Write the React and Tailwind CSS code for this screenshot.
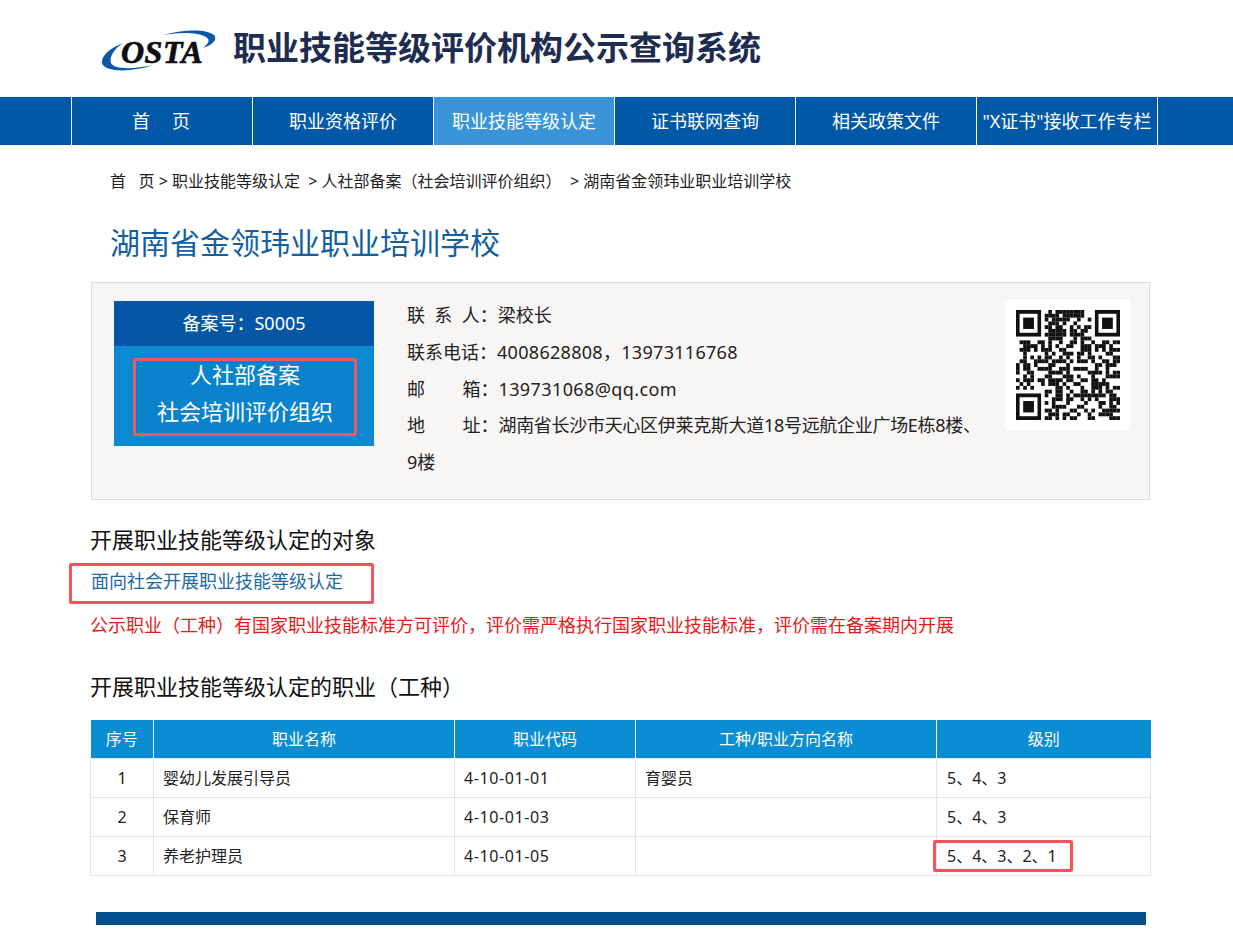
import React from 'react';

const navItems = ['首　页', '职业资格评价', '职业技能等级认定', '证书联网查询', '相关政策文件', '"X证书"接收工作专栏'];

const rows = [
  { no: 1, name: '婴幼儿发展引导员', code: '4-10-01-01', kind: '育婴员', level: '5、4、3' },
  { no: 2, name: '保育师', code: '4-10-01-03', kind: '', level: '5、4、3' },
  { no: 3, name: '养老护理员', code: '4-10-01-05', kind: '', level: '5、4、3、2、1', mark: true },
];

// finder pattern + pseudo random modules for the QR code
function QrCode() {
  const size = 29;
  const cells = [];
  let seed = 73;
  const inFinder = (x, y) => (x < 8 && y < 8) || (x >= size - 8 && y < 8) || (x < 8 && y >= size - 8);
  for (let y = 0; y < size; y++) {
    for (let x = 0; x < size; x++) {
      seed = (seed * 1103515245 + 12345) & 0x7fffffff;
      if (!inFinder(x, y) && ((seed >> 16) & 7) < 4) {
        cells.push(<rect key={x + '-' + y} x={x} y={y} width="1.02" height="1.02" />);
      }
    }
  }
  const finder = (x, y) => (
    <g key={x + '_' + y}>
      <rect x={x} y={y} width="7" height="7" />
      <rect x={x + 1} y={y + 1} width="5" height="5" fill="#fff" />
      <rect x={x + 2} y={y + 2} width="3" height="3" />
    </g>
  );
  return (
    <svg viewBox="0 0 29 29" className="w-[104px] h-[110px]" preserveAspectRatio="none" fill="#111">
      {cells}
      {finder(0, 0)}
      {finder(22, 0)}
      {finder(0, 22)}
    </svg>
  );
}

function Logo() {
  return (
    <div className="relative w-[118px] h-[46px]">
      <svg viewBox="0 0 118 46" className="w-full h-full">
        <path d="M23 17 C10 22 1 30 2 37 C4 46 30 47 53 39 C35 43 14 44 11 37 C9 31 14 23 23 17 Z" fill="#0c57a6" />
        <path d="M63 9 C80 4 105 2 114 9 C118 14 112 19 103 22 C108 18 111 14 106 11 C98 6 80 6 63 9 Z" fill="#0c57a6" />
      </svg>
      <span className="absolute left-[21px] top-[8px] font-['Liberation_Serif',serif] italic font-bold text-[32px] leading-[36px] tracking-[0.5px] text-[#0d0d14] [-webkit-text-stroke:0.7px_#0d0d14]">OSTA</span>
    </div>
  );
}

export default function App() {
  return (
    <div className="w-[1233px] h-[933px] overflow-hidden bg-white text-[#222] font-['Noto_Sans','Noto_Sans_CJK_SC',sans-serif]">
      <header className="h-[97px] pl-[100px] flex items-center">
        <Logo />
        <h1 className="ml-[15px] text-[33px] font-bold text-[#1e2c50] leading-none -mt-[2px]">职业技能等级评价机构公示查询系统</h1>
      </header>

      <nav className="h-[48px] bg-[#0058a6] pl-[71px] flex">
        {navItems.map((item, i) => (
          <a
            key={item}
            className={`h-full flex items-center justify-center border-l border-white text-white text-[18px] whitespace-nowrap ${i === 5 ? 'w-[182px] border-r' : 'w-[181px]'} ${i === 0 ? 'tracking-[2px]' : ''} ${i === 2 ? 'bg-[#3a94d8]' : ''}`}
          >
            {item}
          </a>
        ))}
      </nav>

      <div className="pl-[110px] pt-[25px] h-[72px] text-[16px] leading-[22px] whitespace-nowrap text-[#222]">
        首&nbsp;&nbsp;&nbsp;页 &gt; 职业技能等级认定 &nbsp;&gt; 人社部备案（社会培训评价组织） &nbsp;&gt; 湖南省金领玮业职业培训学校
      </div>

      <h2 className="pl-[110px] text-[30px] leading-[52px] text-[#14609f]">湖南省金领玮业职业培训学校</h2>

      <section className="mx-[91px] mt-[13px] w-[1059px] h-[218px] border border-[#dcdcdc] bg-[#f8f6f5] flex pt-[18px] pl-[22px]">
        <div className="w-[260px] h-[145px] bg-[#0b8ad2] shrink-0">
          <div className="h-[45px] bg-[#0557a6] text-white text-[18px] flex items-center justify-center">备案号：S0005</div>
          <div className="mx-[19px] mt-[12px] h-[78px] w-[224px] border-[3px] border-[#ea5a62] rounded-[2px] text-white text-[22px] leading-[37px] text-center bg-[#0b82cc]">
            <div className="-mt-[5px]">人社部备案<br />社会培训评价组织</div>
          </div>
        </div>
        <div className="ml-[33px] w-[580px] text-[18px] leading-[36.75px] -mt-[4px] text-[#222] whitespace-nowrap">
          <p>联&nbsp;&nbsp;系&nbsp;&nbsp;人：梁校长</p>
          <p>联系电话：<span className="tracking-[0.3px]">4008628808，13973116768</span></p>
          <p>邮 &nbsp; &nbsp; &nbsp; &nbsp;箱：<span className="tracking-[0.4px]">139731068@qq.com</span></p>
          <p>地 &nbsp; &nbsp; &nbsp; &nbsp;址：<span className="tracking-[-0.3px]">湖南省长沙市天心区伊莱克斯大道18号远航企业广场E栋8楼、</span><br />9楼</p>
        </div>
        <div className="ml-[18px] -mt-[1px] w-[125px] h-[130px] bg-white flex items-center justify-center">
          <QrCode />
        </div>
      </section>

      <div className="px-[91px]">
        <h3 className="mt-[22px] -ml-px text-[22px] leading-[34px] text-[#111]">开展职业技能等级认定的对象</h3>
        <div className="-ml-[22px] mt-[7px] w-[305px] h-[41px] border-[3px] border-[#f4545c] rounded-[2px] pl-[19px] text-[18px] leading-[31px] text-[#1b6aa8]">
          面向社会开展职业技能等级认定
        </div>
        <p className="mt-[6px] -ml-px text-[18px] leading-[30px] text-[#e21b1b] whitespace-nowrap">
          公示职业（工种）有国家职业技能标准方可评价，评价需严格执行国家职业技能标准，评价需在备案期内开展
        </p>
        <h3 className="mt-[29px] -ml-px text-[22px] leading-[34px] text-[#111]">开展职业技能等级认定的职业（工种）</h3>

        <table className="mt-[17px] -ml-px w-[1060px] table-fixed border-collapse text-[16px]">
          <colgroup>
            <col className="w-[63px]" />
            <col className="w-[301px]" />
            <col className="w-[181px]" />
            <col className="w-[301px]" />
            <col className="w-[214px]" />
          </colgroup>
          <thead>
            <tr className="h-[38px] bg-[#0b8dd4] text-white">
              {['序号', '职业名称', '职业代码', '工种/职业方向名称', '级别'].map((h, i) => (
                <th key={h} className={`font-normal text-center ${i > 0 ? 'border-l border-white' : ''}`}>{h}</th>
              ))}
            </tr>
          </thead>
          <tbody>
            {rows.map((r) => (
              <tr key={r.no} className="h-[39px] text-[#222]">
                <td className="border border-[#e4e4e4] text-center">{r.no}</td>
                <td className="border border-[#e4e4e4] px-[9px]">{r.name}</td>
                <td className="border border-[#e4e4e4] px-[9px] tracking-[0.6px]">{r.code}</td>
                <td className="border border-[#e4e4e4] px-[9px]">{r.kind}</td>
                <td className="relative border border-[#e4e4e4] px-[10px]">
                  {r.level}
                  {r.mark && <span className="absolute left-[-4px] top-[3px] w-[140px] h-[32px] border-[3px] border-[#f4545c] rounded-[2px]" />}
                </td>
              </tr>
            ))}
          </tbody>
        </table>
      </div>

      <div className="ml-[96px] mt-[36px] w-[1050px] h-[13px] bg-[#02508f]" />
    </div>
  );
}
